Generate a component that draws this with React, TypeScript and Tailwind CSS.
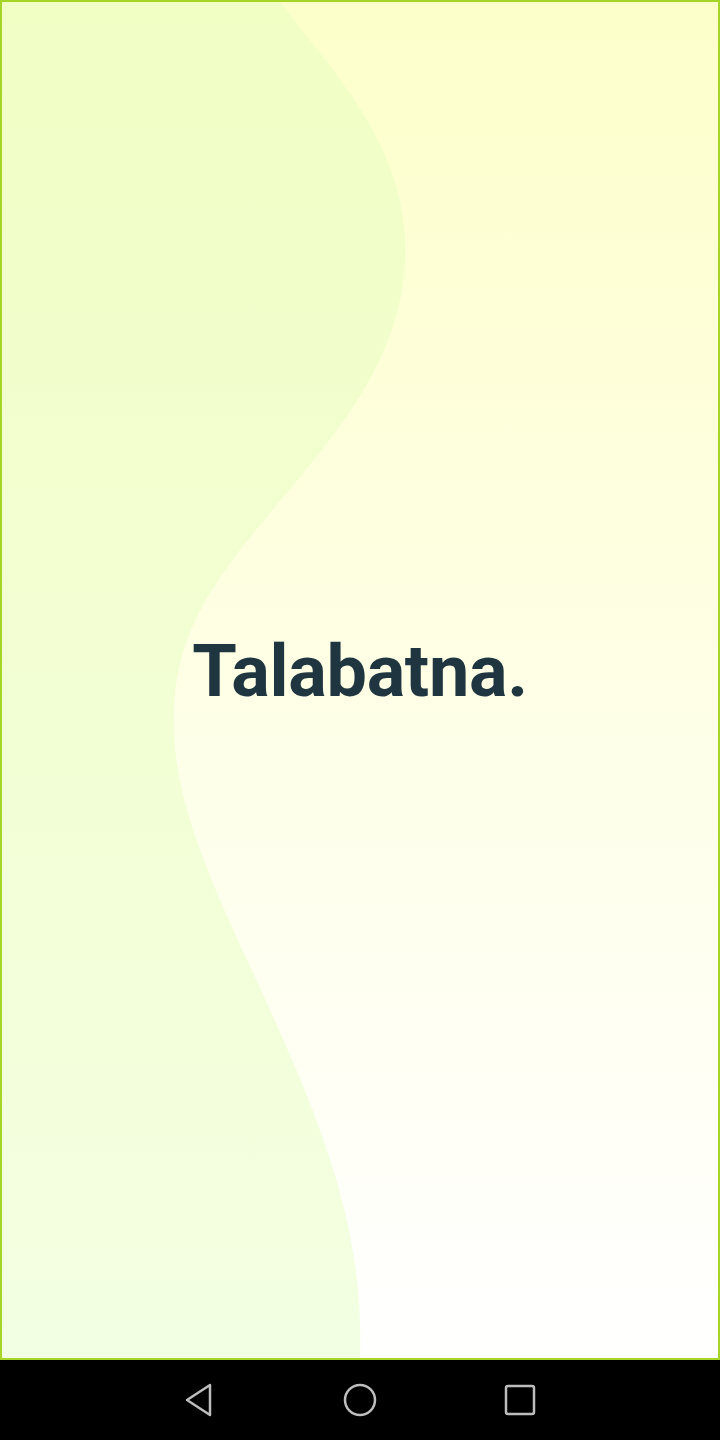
export default function App() {
  return (
    <div className="flex h-[1440px] w-[720px] flex-col bg-black">
      <div className="relative flex h-[1360px] items-center justify-center overflow-hidden border-2 border-[#a4d527] bg-gradient-to-b from-[#fdffca] to-[#ffffff]">
        <svg className="absolute inset-0 h-full w-full" viewBox="0 0 716 1356" preserveAspectRatio="none">
          <defs>
            <linearGradient id="wave" x1="0" y1="0" x2="0" y2="1">
              <stop offset="0" stopColor="#f1fec4" />
              <stop offset="1" stopColor="#f3ffe2" />
            </linearGradient>
          </defs>
          <path
            d="M0 0 L278 0 C 338 78, 408 150, 403 258 C 398 378, 308 458, 238 548 C 188 613, 170 660, 172 728 C 174 818, 228 918, 268 1008 C 318 1118, 363 1228, 358 1356 L0 1356 Z"
            fill="url(#wave)"
          />
        </svg>
        <h1 className="relative pb-[16px] font-['Liberation_Sans_Narrow','Roboto',sans-serif] text-[72px] font-bold tracking-[-0.3px] text-[#1f3641]">
          Talabatna.
        </h1>
      </div>
      <div className="flex h-20 items-center justify-center">
        <div className="flex w-40 justify-center">
          <svg width="32" height="36" viewBox="0 0 32 36" fill="none" stroke="#bdbdbd" strokeWidth="2.5" strokeLinejoin="round">
            <path d="M26 3 L3 18 L26 33 Z" />
          </svg>
        </div>
        <div className="flex w-40 justify-center">
          <svg width="36" height="36" viewBox="0 0 36 36" fill="none" stroke="#bdbdbd" strokeWidth="2.5">
            <circle cx="18" cy="18" r="15" />
          </svg>
        </div>
        <div className="flex w-40 justify-center">
          <svg width="34" height="34" viewBox="0 0 34 34" fill="none" stroke="#bdbdbd" strokeWidth="2.5">
            <rect x="3" y="3" width="28" height="28" rx="2" />
          </svg>
        </div>
      </div>
    </div>
  );
}
